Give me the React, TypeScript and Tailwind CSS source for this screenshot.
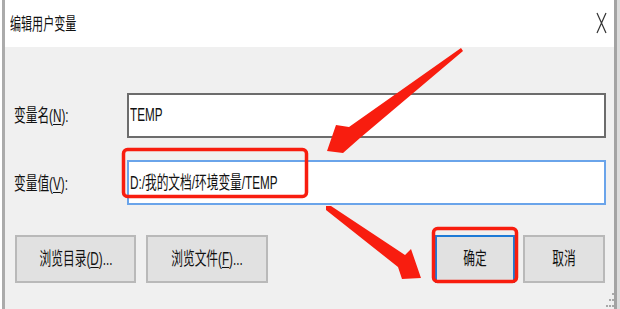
import React from "react";

const font = { fontFamily: '"Liberation Sans", "Noto Sans CJK SC", sans-serif' };

function T({ children, className = "" }: { children: React.ReactNode; className?: string }) {
  return (
    <span className={"inline-block scale-x-[0.65] whitespace-nowrap " + className}>{children}</span>
  );
}

function Btn({ children, w, focused }: { children: React.ReactNode; w: string; focused?: boolean }) {
  return (
    <div
      className={
        "h-[48px] flex items-center justify-center bg-[#e1e1e1] border-2 " +
        (focused ? "border-[#1e7ad6] " : "border-[#b9b9b9] ") +
        w
      }
    >
      <T className="origin-center text-[18px] leading-none text-[#111]">{children}</T>
    </div>
  );
}

export default function App() {
  return (
    <div className="relative w-[620px] h-[309px] flex bg-white overflow-hidden" style={font}>
      <div className="w-[2px] bg-white" />
      <div className="w-[3px] bg-[#ababab]" />
      <div className="flex-1 flex flex-col">
        <div className="h-[47px] bg-white flex items-center justify-between pl-[5px] pr-[7px]">
          <T className="origin-left text-[17px] leading-none text-[#111] mt-[2px]">编辑用户变量</T>
          <svg width="11" height="22" viewBox="0 0 11 22" className="mb-[1px]">
            <path d="M1 1 L10 21 M10 1 L1 21" stroke="#333" strokeWidth="1.2" fill="none" />
          </svg>
        </div>
        <div className="flex-1 bg-[#f0f0f0] flex flex-col pt-[46px]">
          <div className="flex items-center pl-[9px] pr-[8px]">
            <div className="w-[113px] text-[18px] leading-none text-[#111]">
              <T className="origin-left">
                变量名(<span className="underline underline-offset-2">N</span>):
              </T>
            </div>
            <div className="flex-1 h-[45px] bg-white border-2 border-[#6c6c6c] flex items-center pl-[1px] pb-[2px]">
              <T className="origin-left text-[18px] leading-none text-[#111]">TEMP</T>
            </div>
          </div>
          <div className="flex items-center pl-[9px] pr-[8px] mt-[22px]">
            <div className="w-[113px] text-[18px] leading-none text-[#111]">
              <T className="origin-left mt-[3px]">
                变量值(<span className="underline underline-offset-2">V</span>):
              </T>
            </div>
            <div className="flex-1 h-[45px] bg-white border-2 border-[#6aa4ea] flex items-center pl-[1px]">
              <T className="origin-left text-[18px] leading-none text-[#111]">D:/我的文档/环境变量/TEMP</T>
            </div>
          </div>
          <div className="flex items-start justify-between pl-[10px] pr-[9px] mt-[30px]">
            <div className="flex gap-[10px]">
              <Btn w="w-[121px]">
                浏览目录(<span className="underline underline-offset-2">D</span>)...
              </Btn>
              <Btn w="w-[122px]">
                浏览文件(<span className="underline underline-offset-2">F</span>)...
              </Btn>
            </div>
            <div className="flex gap-[8px]">
              <Btn w="w-[80px]" focused>
                确定
              </Btn>
              <Btn w="w-[82px]">取消</Btn>
            </div>
          </div>
        </div>
      </div>
      <div className="w-[3px] bg-[#a3a3a3]" />
      <div className="w-[3px] bg-[#dcdcdc]" />

      <svg className="absolute inset-0 pointer-events-none" width="620" height="309" viewBox="0 0 620 309">
        <rect x="123.5" y="149.5" width="183" height="47" rx="4" fill="none" stroke="#f81d0f" strokeWidth="3.5" />
        <rect x="433.5" y="228.5" width="83" height="53" rx="4" fill="none" stroke="#f81d0f" strokeWidth="3.5" />
        <polygon
          points="461,48 463,51 360,138 343,153 327,151 336,125 349,127"
          fill="#f81d0f"
        />
        <polygon
          points="326,206 331,206 405,255 411,249 421,278 402,279 398,267 326,210"
          fill="#f81d0f"
        />
        <g fill="#a8a8a8">
          <rect x="612" y="293" width="2" height="2" />
          <rect x="609" y="299" width="2" height="2" />
          <rect x="612" y="299" width="2" height="2" />
          <rect x="606" y="305" width="2" height="2" />
          <rect x="609" y="305" width="2" height="2" />
          <rect x="612" y="305" width="2" height="2" />
        </g>
      </svg>
    </div>
  );
}
